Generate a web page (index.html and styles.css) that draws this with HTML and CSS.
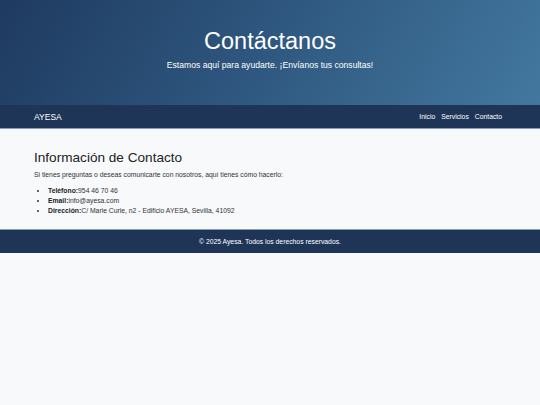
FILE: index.html
```html
<!DOCTYPE html>
<html lang="es">
<head>
<meta charset="utf-8">
<title>Contáctanos - AYESA</title>
<link rel="stylesheet" href="styles.css">
</head>
<body>
<header class="hero">
  <h1 class="hero-title">Contáctanos</h1>
  <p class="hero-sub">Estamos aquí para ayudarte. ¡Envíanos tus consultas!</p>
</header>
<nav class="nav">
  <div class="brand">AYESA</div>
  <ul class="links">
    <li><a href="#">Inicio</a></li>
    <li><a href="#">Servicios</a></li>
    <li><a href="#">Contacto</a></li>
  </ul>
</nav>
<main class="content">
  <h2 class="section-title">Información de Contacto</h2>
  <p class="intro">Si tienes preguntas o deseas comunicarte con nosotros, aquí tienes cómo hacerlo:</p>
  <ul class="info">
    <li><strong>Teléfono:</strong>954 46 70 46</li>
    <li><strong>Email:</strong>info@ayesa.com</li>
    <li><strong>Dirección:</strong>C/ Marie Curie, n2 - Edificio AYESA, Sevilla, 41092</li>
  </ul>
</main>
<footer class="footer">© 2025 Ayesa. Todos los derechos reservados.</footer>
</body>
</html>
```
FILE: styles.css
```css
* { box-sizing: border-box; }
html, body { margin: 0; padding: 0; }
body {
  font-family: "Liberation Sans", Arial, sans-serif;
  background: #f7f9fb;
  color: #333;
  font-size: 6.8px;
}
.hero {
  height: 105px;
  background: linear-gradient(120deg, #1f3a60 0%, #2f5880 50%, #43789e 100%);
  color: #fff;
  text-align: center;
  padding-top: 27px;
}
.hero-title {
  margin: 0;
  font-size: 23.5px;
  font-weight: 400;
  line-height: 28px;
}
.hero-sub {
  margin: 4px 0 0;
  font-size: 8.6px;
  line-height: 12px;
}
.nav {
  height: 24px;
  background: #1f3558;
  border-bottom: 1px solid #8c9bb0;
  display: flex;
  align-items: center;
  justify-content: space-between;
  padding: 0 38px 0 34px;
  color: #fff;
}
.brand { font-size: 8.5px; }
.links {
  list-style: none;
  margin: 0;
  padding: 0;
  display: flex;
  gap: 6px;
}
.links a { color: #fff; text-decoration: none; font-size: 6.8px; }
.content {
  padding: 20px 34px 13px;
}
.section-title {
  margin: 0;
  font-size: 13.6px;
  font-weight: 400;
  line-height: 18px;
  color: #222;
}
.intro {
  margin: 3px 0 0;
  line-height: 10px;
}
.info {
  margin: 6px 0 0;
  padding-left: 14px;
  line-height: 10px;
}
.info strong { color: #222; }
.footer {
  height: 24px;
  background: #1f3558;
  border-top: 1px solid #8c9bb0;
  color: #fff;
  display: flex;
  align-items: center;
  justify-content: center;
  font-size: 6.8px;
}
```
